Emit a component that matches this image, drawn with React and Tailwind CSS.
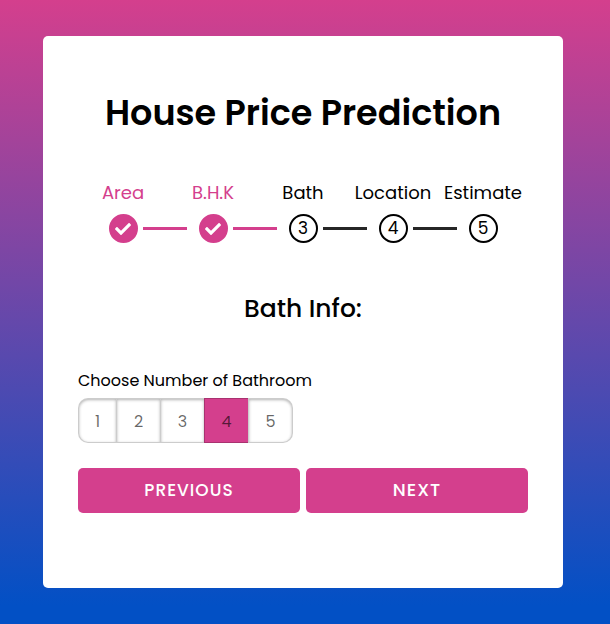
import { useState } from "react";
import { FaCheck } from "react-icons/fa";

const steps = [
  { label: "Area", done: true },
  { label: "B.H.K", done: true },
  { label: "Bath", done: false },
  { label: "Location", done: false },
  { label: "Estimate", done: false },
];

function Step({ step, number, last }) {
  const line = step.done ? "bg-[#d43f8d]" : "bg-[#262626]";
  return (
    <li className="flex flex-1 flex-col items-center">
      <p
        className={`mb-2 text-[18px] leading-[27px] whitespace-nowrap ${
          step.done ? "text-[#d43f8d]" : "text-black"
        }`}
      >
        {step.label}
      </p>
      <div className="grid w-full grid-cols-[1fr_29px_1fr] items-center">
        <span
          className={`col-start-2 flex size-[29px] items-center justify-center rounded-full border-2 text-[17px] leading-[25px] ${
            step.done ? "border-[#d43f8d] bg-[#d43f8d] text-white" : "border-black text-black"
          }`}
        >
          {step.done ? <FaCheck className="size-4" /> : number}
        </span>
        {!last && <span className={`-mr-5 ml-[5px] h-[3px] w-11 ${line}`} />}
      </div>
    </li>
  );
}

function BathPicker() {
  const [value, setValue] = useState(4);
  return (
    <fieldset>
      <legend className="mb-[5px] text-[16px] leading-6">Choose Number of Bathroom</legend>
      <div className="flex">
        {[1, 2, 3, 4, 5].map((n) => (
          <label
            key={n}
            className="-mr-px basis-[45px] border border-black/20 bg-white pt-[11px] pb-2 text-center text-[16px] leading-6 text-black/60 shadow-[inset_0_1px_3px_rgba(0,0,0,0.3)] first:basis-[39px] first:rounded-l-[10px] last:rounded-r-[10px] has-checked:bg-[#d43f8d] has-checked:shadow-none"
          >
            <input
              type="radio"
              name="bath"
              value={n}
              checked={value === n}
              onChange={() => setValue(n)}
              className="sr-only"
            />
            {n}
          </label>
        ))}
      </div>
    </fieldset>
  );
}

const buttonStyle =
  "h-[45px] flex-1 rounded-[5px] bg-[#d43f8d] pb-0.5 leading-6 font-medium tracking-[1px] text-white uppercase";

export default function App() {
  return (
    <main className="flex min-h-screen items-center justify-center bg-[linear-gradient(to_bottom,#d43f8d,#0250c5_97%)] py-9 pr-1 font-['Poppins','Inter',sans-serif] text-black">
      <div className="w-full max-w-[520px] rounded-[5px] bg-white px-[35px] pt-[50px] pb-[75px]">
        <h1 className="text-center text-[35px] leading-[53px] font-semibold">
          House Price Prediction
        </h1>
        <ol className="mt-10 flex">
          {steps.map((step, i) => (
            <Step key={step.label} step={step} number={i + 1} last={i === steps.length - 1} />
          ))}
        </ol>
        <form onSubmit={(e) => e.preventDefault()}>
          <h2 className="mt-[47px] mb-[41px] text-center text-[25px] leading-[38px] font-medium">
            Bath Info:
          </h2>
          <BathPicker />
          <div className="mt-[25px] flex gap-[6px]">
            <button type="button" className={`${buttonStyle} text-[17px]`}>
              Previous
            </button>
            <button type="submit" className={`${buttonStyle} text-[18px]`}>
              Next
            </button>
          </div>
        </form>
      </div>
    </main>
  );
}
